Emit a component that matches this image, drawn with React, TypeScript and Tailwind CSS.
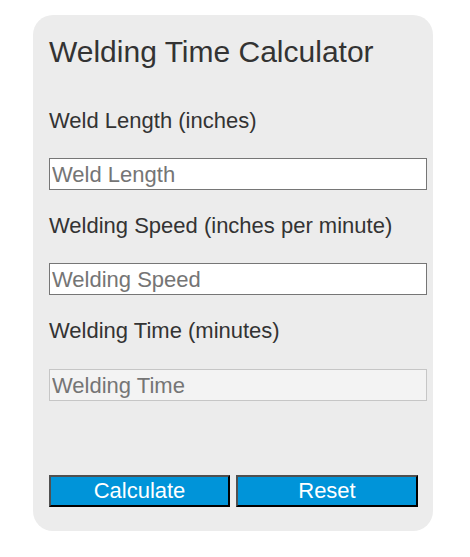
import { useState } from "react";

export default function App() {
  const [length, setLength] = useState("");
  const [speed, setSpeed] = useState("");
  const [time, setTime] = useState("");

  function calculate() {
    const l = parseFloat(length);
    const s = parseFloat(speed);
    if (!isNaN(l) && !isNaN(s) && s !== 0) setTime((l / s).toFixed(2));
  }

  function reset() {
    setLength("");
    setSpeed("");
    setTime("");
  }

  return (
    <div className="w-[470px] h-[557px] bg-white pt-[15px] pl-[33px]" style={{ fontFamily: '"Liberation Sans", Arial, sans-serif' }}>
      <div className="w-[400px] h-[516px] rounded-[20px] bg-[#ececec] pl-[16px] pt-[21px] text-[#333333]">
        <h1 className="h-[32px] leading-[32px] text-[30px] font-normal">Welding Time Calculator</h1>

        <label className="block mt-[41px] h-[24px] leading-[24px] text-[22px]">Weld Length (inches)</label>
        <input
          type="number"
          value={length}
          onChange={(e) => setLength(e.target.value)}
          placeholder="Weld Length"
          className="block mt-[25px] w-[378px] h-[32px] px-[2px] text-[22px] bg-white border border-[#767676] outline-none placeholder:text-[#757575]"
        />

        <label className="block mt-[24px] h-[24px] leading-[24px] text-[22px]">Welding Speed (inches per minute)</label>
        <input
          type="number"
          value={speed}
          onChange={(e) => setSpeed(e.target.value)}
          placeholder="Welding Speed"
          className="block mt-[25px] w-[378px] h-[32px] px-[2px] text-[22px] bg-white border border-[#767676] outline-none placeholder:text-[#757575]"
        />

        <label className="block mt-[24px] h-[24px] leading-[24px] text-[22px]">Welding Time (minutes)</label>
        <input
          type="text"
          readOnly
          value={time}
          placeholder="Welding Time"
          className="block mt-[26px] w-[378px] h-[32px] px-[2px] text-[22px] bg-[#f3f3f3] border border-[#c6c6c6] outline-none placeholder:text-[#757575]"
        />

        <div className="flex gap-[6px] mt-[74px]">
          <button
            onClick={calculate}
            className="w-[181px] h-[32px] text-[22px] leading-[28px] text-white bg-[#0094d9] border-2 border-t-[#505050] border-l-[#505050] border-b-black border-r-black"
          >
            Calculate
          </button>
          <button
            onClick={reset}
            className="w-[182px] h-[32px] text-[22px] leading-[28px] text-white bg-[#0094d9] border-2 border-t-[#505050] border-l-[#505050] border-b-black border-r-black"
          >
            Reset
          </button>
        </div>
      </div>
    </div>
  );
}
